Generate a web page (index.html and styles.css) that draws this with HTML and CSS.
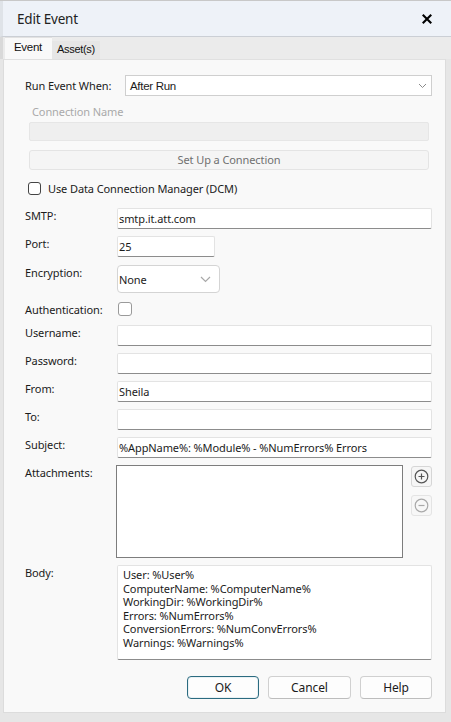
FILE: index.html
```html
<!DOCTYPE html>
<html>
<head>
<meta charset="utf-8">
<link rel="stylesheet" href="styles.css">
</head>
<body>
<div class="window">
  <div class="titlebar">
    <span class="title">Edit Event</span>
    <svg class="close" width="12" height="12" viewBox="0 0 12 12"><path d="M2.5 2.5 L9.5 9.5 M9.5 2.5 L2.5 9.5" stroke="#000" stroke-width="2.1" stroke-linecap="square"/></svg>
  </div>
  <div class="tabs">
    <div class="tab active">Event</div>
    <div class="tab">Asset(s)</div>
  </div>
  <div class="panel">
    <div class="run-row">
      <span class="label run-label">Run Event When:</span>
      <div class="select run-select">
        <span>After Run</span>
        <svg width="9" height="6" viewBox="0 0 9 6"><path d="M1 1 L4.5 4.5 L8 1" fill="none" stroke="#8a8a8a" stroke-width="1"/></svg>
      </div>
    </div>
    <div class="conn">
      <div class="conn-label">Connection Name</div>
      <div class="conn-input"></div>
      <div class="conn-btn">Set Up a Connection</div>
    </div>
    <div class="dcm-row">
      <span class="check dark"></span>
      <span class="dcm-label">Use Data Connection Manager (DCM)</span>
    </div>
    <div class="form">
      <span class="label">SMTP:</span>
      <div class="field">smtp.it.att.com</div>

      <span class="label">Port:</span>
      <div class="field port">25</div>

      <span class="label enc-gap">Encryption:</span>
      <div class="select enc enc-gap">
        <span>None</span>
        <svg width="11" height="7" viewBox="0 0 11 7"><path d="M1 1 L5.5 5.5 L10 1" fill="none" stroke="#a8a8a8" stroke-width="1.2"/></svg>
      </div>

      <span class="label auth-gap">Authentication:</span>
      <div class="auth-gap"><span class="check light"></span></div>

      <span class="label user-gap">Username:</span>
      <div class="field user-gap"></div>

      <span class="label">Password:</span>
      <div class="field"></div>

      <span class="label">From:</span>
      <div class="field">Sheila</div>

      <span class="label">To:</span>
      <div class="field"></div>

      <span class="label">Subject:</span>
      <div class="field">%AppName%: %Module% - %NumErrors% Errors</div>

      <span class="label">Attachments:</span>
      <div class="attach">
        <div class="listbox"></div>
        <div class="side-btns">
          <div class="icon-btn">
            <svg width="15" height="15" viewBox="0 0 15 15"><circle cx="7.5" cy="7.5" r="6.3" fill="none" stroke="#555" stroke-width="1.2"/><path d="M4.5 7.5 H10.5 M7.5 4.5 V10.5" stroke="#555" stroke-width="1.2"/></svg>
          </div>
          <div class="icon-btn disabled">
            <svg width="15" height="15" viewBox="0 0 15 15"><circle cx="7.5" cy="7.5" r="6.3" fill="none" stroke="#a9a9a9" stroke-width="1.2"/><path d="M4.5 7.5 H10.5" stroke="#a9a9a9" stroke-width="1.2"/></svg>
          </div>
        </div>
      </div>

      <span class="label">Body:</span>
      <div class="field body-text">User: %User%<br>ComputerName: %ComputerName%<br>WorkingDir: %WorkingDir%<br>Errors: %NumErrors%<br>ConversionErrors: %NumConvErrors%<br>Warnings: %Warnings%</div>
    </div>
    <div class="buttons">
      <div class="btn primary">OK</div>
      <div class="btn cancel">Cancel</div>
      <div class="btn">Help</div>
    </div>
  </div>
</div>
</body>
</html>
```

FILE: styles.css
```css
* { box-sizing: border-box; }
html, body {
  margin: 0;
  padding: 0;
}
body {
  width: 451px;
  height: 722px;
  background: #e6e6e6;
  font-family: "Noto Sans", "Open Sans", sans-serif;
  font-size: 11px;
  letter-spacing: -0.1px;
  color: #1b1b1b;
  overflow: hidden;
}
.window {
  width: 451px;
  height: 722px;
  display: flex;
  flex-direction: column;
  border-top: 1px solid #c8c8c8;
}
.titlebar {
  height: 36px;
  background: #eef2f8;
  border-bottom: 1px solid #cbcfd5;
  display: flex;
  align-items: center;
  justify-content: space-between;
  padding: 0 18px 0 14px;
  border-left: 3px solid #dfe3e8;
}
.title {
  font-size: 13.5px;
  color: #222;
  letter-spacing: -0.2px;
}
.close { display: block; margin-top: 1px; }
.tabs {
  height: 22px;
  display: flex;
  align-items: flex-end;
  background: #ebebeb;
  border-left: 3px solid #d9d9d9;
  padding-left: 2px;
}
.tab {
  font-family: "Liberation Sans", Arial, sans-serif;
  font-size: 11px;
  letter-spacing: -0.3px;
  color: #111;
  height: 18px;
  line-height: 17px;
  padding: 0 5px;
  background: #e6e6e6;
}
.tab.active {
  height: 22px;
  line-height: 19px;
  width: 47px;
  padding: 0 0 0 9px;
  background: #f9f9f9;
  border-top: 1px solid #e2e2e2;
  font-size: 11.5px;
}
.panel {
  margin-left: 3px;
  width: 443px;
  height: 654px;
  background: #f9f9f9;
  border: 1px solid #dcdcdc;
  border-top: 1px solid #e0e0e0;
  padding: 15px 13px 0 21px;
}
.label {
  line-height: 15px;
  color: #1b1b1b;
  white-space: nowrap;
}
.run-row {
  display: flex;
  align-items: center;
  height: 21px;
}
.run-label { width: 100px; }
.select {
  background: #fff;
  border: 1px solid #cfcfcf;
  display: flex;
  align-items: center;
  justify-content: space-between;
}
.run-select {
  flex: 1;
  height: 21px;
  padding: 0 4px;
  font-family: "Liberation Sans", Arial, sans-serif;
  font-size: 11.5px;
  letter-spacing: -0.3px;
}
.conn {
  margin: 8px 3px 0 4px;
}
.conn-label {
  color: #a9a9a9;
  line-height: 16px;
  padding-left: 3px;
}
.conn-input {
  margin-top: 2px;
  height: 19px;
  background: #efefef;
  border: 1px solid #e6e6e6;
  border-radius: 2px;
}
.conn-btn {
  margin-top: 9px;
  height: 20px;
  background: #f5f5f5;
  border: 1px solid #e4e4e4;
  border-radius: 3px;
  color: #707070;
  text-align: center;
  line-height: 18px;
}
.dcm-row {
  margin-top: 10px;
  display: flex;
  align-items: center;
  height: 16px;
}
.check {
  display: inline-block;
  border-radius: 3px;
  background: #fff;
}
.check.dark {
  width: 13px;
  height: 13px;
  border: 1px solid #444;
  margin-left: 3px;
  margin-right: 7px;
}
.check.light {
  width: 14px;
  height: 14px;
  border: 1px solid #9a9a9a;
  margin-left: 1px;
  display: block;
}
.dcm-label { color: #1b1b1b; }
.form {
  margin-top: 12px;
  display: grid;
  grid-template-columns: 92px 1fr;
  row-gap: 7px;
  align-items: start;
}
.field {
  height: 21px;
  background: #fff;
  border: 1px solid #e3e3e3;
  border-bottom: 1px solid #8c8c8c;
  border-radius: 2px;
  padding: 0 1px;
  line-height: 19px;
  white-space: nowrap;
  overflow: hidden;
}
.port { width: 98px; }
.enc-gap { margin-top: 1px; }
.auth-gap { margin-top: 2px; }
.user-gap { margin-top: 1px; }
.enc {
  width: 103px;
  height: 28px;
  border: 1px solid #d4d4d4;
  border-radius: 4px;
  padding: 0 8px 0 1px;
}
.enc span { margin-top: 1px; }
.attach {
  display: flex;
  gap: 8px;
}
.listbox {
  flex: 1;
  height: 93px;
  background: #fff;
  border: 1px solid #7d7d7d;
  margin-left: -1px;
}
.side-btns {
  display: flex;
  flex-direction: column;
  gap: 8px;
  padding-top: 1px;
}
.icon-btn {
  width: 21px;
  height: 21px;
  border: 1px solid #d6d6d6;
  border-radius: 3px;
  background: #f6f6f6;
  display: flex;
  align-items: center;
  justify-content: center;
}
.icon-btn.disabled {
  border-color: #e4e4e4;
  background: #f7f7f7;
}
.body-text {
  height: 95px;
  padding: 2px 5px;
  line-height: 13.6px;
  white-space: normal;
}
.buttons {
  margin-top: 16px;
  display: flex;
  justify-content: flex-end;
  gap: 9px;
}
.btn {
  width: 72px;
  height: 23px;
  border: 1px solid #d0d0d0;
  border-bottom-color: #bdbdbd;
  border-radius: 4px;
  background: #fdfdfd;
  text-align: center;
  line-height: 21px;
  font-size: 12px;
  color: #1b1b1b;
}
.btn.cancel { width: 83px; }
.btn.primary {
  border: 1px solid #2b6b80;
  box-shadow: inset 0 0 0 1px #e9f1f4;
}
```
